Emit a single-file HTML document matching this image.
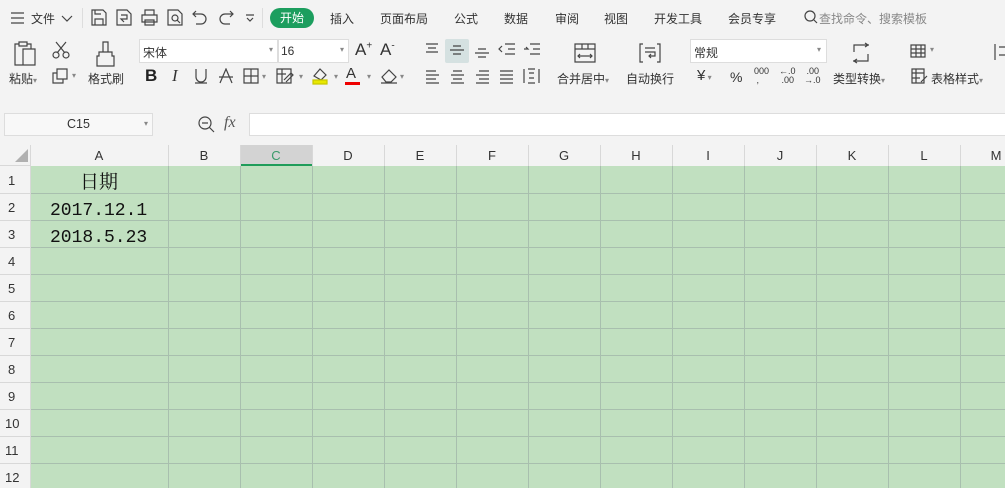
<!DOCTYPE html><html><head><meta charset="utf-8"><style>
*{margin:0;padding:0;box-sizing:border-box}
body{width:1005px;height:488px;overflow:hidden;background:#f3f3f3;font-family:"Liberation Sans","Noto Sans CJK SC",sans-serif;font-size:12px;color:#333;position:relative}
.a{position:absolute;white-space:nowrap}
svg{position:absolute;fill:none;stroke:#444;stroke-width:1.2}
.tab{top:10px;font-size:12px}
.lb{font-size:12px}
</style></head><body>
<svg style="left:10px;top:11px" width="16" height="14"><path d="M1 2h13M1 7h13M1 12h13"/></svg>
<div class="a tab" style="left:31px">文件</div>
<svg style="left:61px;top:13px" width="12" height="10" stroke="#999"><path d="M1 3l5 5 5-5"/></svg>
<div class="a" style="left:82px;top:8px;width:1px;height:20px;background:#ddd"></div>
<svg style="left:91px;top:9px" width="16" height="17"><path d="M1 1h11l3 3v12H1zM4 16v-6h8v6M4 1v4h6"/></svg>
<svg style="left:116px;top:9px" width="17" height="17"><path d="M1 1h10l4 4v11H1zM5 6h6v4H5l3 3"/></svg>
<svg style="left:141px;top:9px" width="17" height="17"><path d="M4 6V1h9v5M1 6h15v7H1zM4 11h9v5H4z"/></svg>
<svg style="left:167px;top:9px" width="17" height="17"><path d="M1 1h10l4 4v11H1z"/><circle cx="8" cy="9" r="3"/><path d="M10 11l3 3"/></svg>
<svg style="left:192px;top:9px" width="16" height="16"><path d="M4 2L1 5l3 3M1 5h8a5 5 0 010 10H4"/></svg>
<svg style="left:218px;top:9px" width="16" height="16"><path d="M12 2l3 3-3 3M15 5H7a5 5 0 000 10h5"/></svg>
<svg style="left:245px;top:14px" width="10" height="8"><path d="M1 1h8M2 4l3 3 3-3"/></svg>
<div class="a" style="left:262px;top:8px;width:1px;height:20px;background:#ddd"></div>
<div class="a" style="left:270px;top:8px;width:44px;height:20px;border-radius:10px;background:#1c9e5e;color:#fff;text-align:center;line-height:20px;font-size:12px">开始</div>
<div class="a tab" style="left:330px">插入</div>
<div class="a tab" style="left:380px">页面布局</div>
<div class="a tab" style="left:454px">公式</div>
<div class="a tab" style="left:504px">数据</div>
<div class="a tab" style="left:555px">审阅</div>
<div class="a tab" style="left:604px">视图</div>
<div class="a tab" style="left:654px">开发工具</div>
<div class="a tab" style="left:728px">会员专享</div>
<svg style="left:804px;top:10px" width="14" height="15" stroke="#999"><circle cx="6" cy="6" r="5"/><path d="M10 10l3 3"/></svg>
<div class="a tab" style="left:819px;color:#888">查找命令、搜索模板</div>
<svg style="left:14px;top:40px" width="24" height="26"><path d="M5 4H1v21h8M5 2h8v4H5zM13 4h4v5M9 9h12v16H9z"/></svg>
<svg style="left:52px;top:41px" width="18" height="18"><circle cx="4" cy="14" r="3"/><circle cx="14" cy="14" r="3"/><path d="M5 12L14 1M13 12L4 1"/></svg>
<svg style="left:95px;top:41px" width="22" height="26"><path d="M8 1h5v10H8zM4 11h13v4h2v10H2V15h2z"/></svg>
<div class="a" style="left:139px;top:39px;width:139px;height:24px;background:#fff;border:1px solid #ddd"></div>
<div class="a lb" style="left:143px;top:44px">宋体</div>
<div class="a" style="left:269px;top:45px;font-size:8px;color:#888">▾</div>
<div class="a" style="left:278px;top:39px;width:71px;height:24px;background:#fff;border:1px solid #ddd"></div>
<div class="a lb" style="left:281px;top:44px">16</div>
<div class="a" style="left:340px;top:45px;font-size:8px;color:#888">▾</div>
<div class="a" style="left:355px;top:40px;font-size:17px">A<sup style="font-size:10px">+</sup></div>
<div class="a" style="left:380px;top:40px;font-size:17px">A<sup style="font-size:10px">-</sup></div>
<svg style="left:424px;top:43px" width="16" height="14"><path d="M2 1h12M4 5h8M2 9h12"/></svg>
<div class="a" style="left:445px;top:39px;width:24px;height:24px;background:#d5e1e1;border-radius:2px"></div>
<svg style="left:449px;top:44px" width="16" height="14"><path d="M4 2h8M1 6h14M4 10h8"/></svg>
<svg style="left:474px;top:45px" width="16" height="14"><path d="M4 4h8M1 8h14M4 12h8"/></svg>
<svg style="left:498px;top:43px" width="18" height="14"><path d="M7 1h10M10 6h7M7 11h10M4 3L1 6l3 3"/></svg>
<svg style="left:523px;top:43px" width="18" height="14"><path d="M7 1h10M10 6h7M7 11h10M1 6h4l-2-2"/></svg>
<svg style="left:574px;top:43px" width="22" height="20"><path d="M1 1h20v18H1zM1 6h20M8 1v5M14 1v5M4 13h14M6 11l-2 2 2 2M16 11l2 2-2 2"/></svg>
<svg style="left:639px;top:43px" width="22" height="20"><path d="M4 1H1v18h3M18 1h3v18h-3M6 5h10M6 9h10v4h-6M12 11l-2 2 2 2"/></svg>
<div class="a" style="left:690px;top:39px;width:137px;height:24px;background:#fff;border:1px solid #ddd"></div>
<div class="a lb" style="left:694px;top:44px">常规</div>
<div class="a" style="left:817px;top:45px;font-size:8px;color:#888">▾</div>
<svg style="left:851px;top:42px" width="20" height="22"><path d="M3 10V3h15M14 1l3 2-3 2M17 12v7H2M6 17l-3 2 3 2"/></svg>
<svg style="left:910px;top:44px" width="16" height="14"><path d="M1 1h14v12H1zM1 5h14M1 9h14M6 1v12M11 1v12"/></svg>
<div class="a" style="left:930px;top:45px;font-size:8px;color:#888">▾</div>
<svg style="left:993px;top:43px" width="12" height="18"><path d="M2 1v16M6 4h6M6 12h6"/></svg>
<div class="a lb" style="left:9px;top:70px">粘贴<span style="font-size:8px;color:#888">▾</span></div>
<svg style="left:52px;top:68px" width="16" height="16"><path d="M5 1h10v10H5zM5 5H1v10h10v-4"/></svg>
<div class="a" style="left:72px;top:71px;font-size:8px;color:#888">▾</div>
<div class="a lb" style="left:88px;top:70px">格式刷</div>
<div class="a" style="left:145px;top:66px;font-size:17px;font-weight:bold;color:#222">B</div>
<div class="a" style="left:172px;top:66px;font-size:17px;font-style:italic;font-family:'Liberation Serif',serif">I</div>
<svg style="left:194px;top:68px" width="14" height="16"><path d="M2 1v8a5 5 0 0010 0V1M1 15h12"/></svg>
<svg style="left:218px;top:68px" width="16" height="16"><path d="M2 15L8 1l6 14M1 9h14"/></svg>
<svg style="left:243px;top:68px" width="16" height="16"><path d="M1 1h14v14H1zM8 1v14M1 8h14"/></svg>
<div class="a" style="left:262px;top:72px;font-size:8px;color:#888">▾</div>
<svg style="left:276px;top:68px" width="18" height="16"><path d="M1 1h14v14H1zM1 6h9M6 1v14M8 12l7-7 2 2-7 7"/></svg>
<div class="a" style="left:299px;top:72px;font-size:8px;color:#888">▾</div>
<svg style="left:311px;top:67px" width="18" height="18"><path d="M3 9l6-7 6 6-5 5z"/><path d="M2 13h14v4H2z" fill="#e8e800" stroke="#c8c800"/></svg>
<div class="a" style="left:334px;top:72px;font-size:8px;color:#888">▾</div>
<div class="a" style="left:346px;top:65px;font-size:15px">A</div>
<div class="a" style="left:345px;top:82px;width:15px;height:3px;background:#e00"></div>
<div class="a" style="left:367px;top:72px;font-size:8px;color:#888">▾</div>
<svg style="left:380px;top:68px" width="18" height="16"><path d="M2 9l7-7 7 7-5 5H6zM1 15h16"/></svg>
<div class="a" style="left:400px;top:72px;font-size:8px;color:#888">▾</div>
<svg style="left:425px;top:70px" width="15" height="14"><path d="M1 1h10M1 5h13M1 9h10M1 13h13"/></svg>
<svg style="left:450px;top:70px" width="15" height="14"><path d="M3 1h9M1 5h13M3 9h9M1 13h13"/></svg>
<svg style="left:475px;top:70px" width="15" height="14"><path d="M4 1h10M1 5h13M4 9h10M1 13h13"/></svg>
<svg style="left:499px;top:70px" width="15" height="14"><path d="M1 1h13M1 5h13M1 9h13M1 13h13"/></svg>
<svg style="left:523px;top:68px" width="17" height="16"><path d="M1 1v14M16 1v14M5 1h7M5 15h7M6 5h5M6 10h5"/></svg>
<div class="a lb" style="left:557px;top:70px">合并居中<span style="font-size:8px;color:#888">▾</span></div>
<div class="a lb" style="left:626px;top:70px">自动换行</div>
<div class="a" style="left:697px;top:67px;font-size:15px">¥<span style="font-size:8px;color:#888"> ▾</span></div>
<div class="a" style="left:730px;top:69px;font-size:14px">%</div>
<div class="a" style="left:754px;top:67px;font-size:9px;line-height:9px">000<br>&nbsp;,</div>
<div class="a" style="left:779px;top:67px;font-size:9px;line-height:9px">←.0<br>&nbsp;.00</div>
<div class="a" style="left:804px;top:67px;font-size:9px;line-height:9px">&nbsp;.00<br>→.0</div>
<div class="a lb" style="left:833px;top:70px">类型转换<span style="font-size:8px;color:#888">▾</span></div>
<svg style="left:911px;top:68px" width="18" height="16"><path d="M1 1h12v14H1zM1 5h12M1 10h8M5 1v14M10 14l6-6"/></svg>
<div class="a lb" style="left:931px;top:70px">表格样式<span style="font-size:8px;color:#888">▾</span></div>
<div class="a" style="left:4px;top:113px;width:149px;height:23px;background:#f8f8f8;border:1px solid #ddd;text-align:center;line-height:21px;font-size:12.5px">C15</div>
<div class="a" style="left:144px;top:119px;font-size:8px;color:#888">▾</div>
<svg style="left:198px;top:116px" width="18" height="18"><circle cx="7" cy="7" r="6"/><path d="M4 7h6M11 11l5 5"/></svg>
<div class="a" style="left:224px;top:114px;font-size:16px;font-style:italic;font-family:'Liberation Serif',serif;color:#555">fx</div>
<div class="a" style="left:249px;top:113px;width:760px;height:23px;background:#fff;border:1px solid #ddd"></div>
<svg style="left:0;top:145px;stroke:none" width="1005" height="343">
<rect x="0" y="0" width="1005" height="21" fill="#f3f3f3"/>
<rect x="0" y="21" width="30" height="322" fill="#f3f3f3"/>
<rect x="30" y="21" width="975" height="322" fill="#c1e0c0"/>
<rect x="240" y="0" width="72" height="21" fill="#d3d3d3"/>
<rect x="240" y="19" width="72" height="2" fill="#1f9c5a"/>
<path d="M28 4v13H15z" fill="#b0b0b0"/>
<g stroke="#a8bfae" stroke-width="1">
<path d="M168.5 21V343M240.5 21V343M312.5 21V343M384.5 21V343M456.5 21V343M528.5 21V343M600.5 21V343M672.5 21V343M744.5 21V343M816.5 21V343M888.5 21V343M960.5 21V343"/>
<path d="M30 48.5H1005M30 75.5H1005M30 102.5H1005M30 129.5H1005M30 156.5H1005M30 183.5H1005M30 210.5H1005M30 237.5H1005M30 264.5H1005M30 291.5H1005M30 318.5H1005"/>
</g>
<g stroke="#d8d8d8" stroke-width="1">
<path d="M30.5 0V343M168.5 0V21M240.5 0V21M312.5 0V21M384.5 0V21M456.5 0V21M528.5 0V21M600.5 0V21M672.5 0V21M744.5 0V21M816.5 0V21M888.5 0V21M960.5 0V21"/>
<path d="M0 20.5H30M0 48.5H30M0 75.5H30M0 102.5H30M0 129.5H30M0 156.5H30M0 183.5H30M0 210.5H30M0 237.5H30M0 264.5H30M0 291.5H30M0 318.5H30"/>
</g>
<g font-family="Liberation Sans" font-size="13" fill="#333" text-anchor="middle">
<text x="99" y="15">A</text><text x="204" y="15">B</text><text x="276" y="15" fill="#3a9a6a">C</text><text x="348" y="15">D</text><text x="420" y="15">E</text><text x="492" y="15">F</text><text x="564" y="15">G</text><text x="636" y="15">H</text><text x="708" y="15">I</text><text x="780" y="15">J</text><text x="852" y="15">K</text><text x="924" y="15">L</text><text x="996" y="15">M</text>
</g>
<g font-family="Liberation Sans" font-size="13" fill="#333">
<text x="8" y="40">1</text><text x="8" y="67">2</text><text x="8" y="94">3</text><text x="8" y="121">4</text><text x="8" y="148">5</text><text x="8" y="175">6</text><text x="8" y="202">7</text><text x="8" y="229">8</text><text x="8" y="256">9</text><text x="5" y="283">10</text><text x="5" y="310">11</text><text x="5" y="337">12</text>
</g>
<text x="80" y="43" font-family="Noto Serif CJK SC,serif" font-size="19" fill="#111">日期</text>
<g font-family="Liberation Mono,monospace" font-size="18" fill="#111">
<text x="50" y="70">2017.12.1</text>
<text x="50" y="97">2018.5.23</text>
</g>
</svg>
</body></html>
